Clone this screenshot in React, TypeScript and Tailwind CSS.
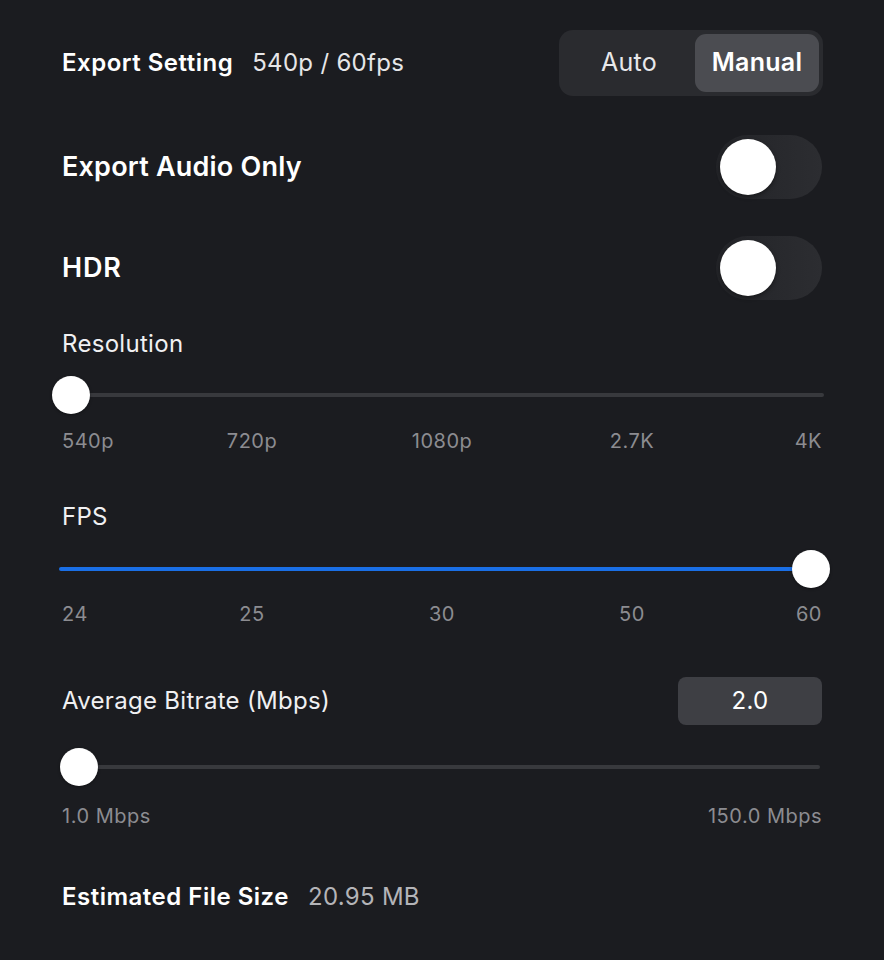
import React from "react";

const font = { fontFamily: "Inter, 'Noto Sans', sans-serif" };

function Toggle() {
  return (
    <div className="relative h-[64px] w-[106px] rounded-full bg-gradient-to-r from-[#232428] to-[#2c2d31]">
      <div className="absolute left-[4px] top-[4px] h-[56px] w-[56px] rounded-full bg-white shadow-[0_2px_4px_rgba(0,0,0,0.4)]" />
    </div>
  );
}

function Knob({ left }: { left: number }) {
  return (
    <div
      className="absolute top-[1px] h-[38px] w-[38px] rounded-full bg-white shadow-[0_1px_3px_rgba(0,0,0,0.4)]"
      style={{ left }}
    />
  );
}

function Ticks({ labels }: { labels: string[] }) {
  return (
    <div className="flex h-[24px] justify-between text-[20px] leading-[24px] tracking-[0.5px] text-[#8c8c91]">
      {labels.map((l, i) => {
        const pos =
          i === 0 ? "justify-start" : i === labels.length - 1 ? "justify-end" : "justify-center";
        return (
          <div key={l} className={`flex w-0 whitespace-nowrap ${pos}`}>
            <span>{l}</span>
          </div>
        );
      })}
    </div>
  );
}

export default function App() {
  return (
    <div className="min-h-[960px] w-full bg-[#1b1c20] px-[62px] pt-[30px] text-white" style={font}>
      {/* Export Setting */}
      <div className="flex h-[66px] items-center justify-between">
        <div className="flex items-baseline gap-[19px]">
          <span className="text-[24px] font-semibold tracking-[0.5px]">Export Setting</span>
          <span className="text-[24px] font-normal tracking-[0.3px] text-[#e6e6e8]">540p / 60fps</span>
        </div>
        <div className="-mr-px flex h-[66px] w-[264px] items-center rounded-[14px] bg-[#2a2b2f] p-[4px]">
          <div className="flex h-full flex-1 items-center justify-center text-[25px] tracking-[0.3px] text-[#e8e8ea]">
            Auto
          </div>
          <div className="flex h-[58px] w-[124px] items-center justify-center rounded-[11px] bg-[#4b4c51] text-[25px] font-semibold tracking-[0.3px]">
            Manual
          </div>
        </div>
      </div>

      {/* Export Audio Only */}
      <div className="mt-[39px] flex h-[64px] items-center justify-between">
        <span className="text-[27px] font-semibold tracking-[0.2px]">Export Audio Only</span>
        <Toggle />
      </div>

      {/* HDR */}
      <div className="mt-[37px] flex h-[64px] items-center justify-between">
        <span className="text-[27px] font-semibold tracking-[0.8px]">HDR</span>
        <Toggle />
      </div>

      {/* Resolution */}
      <div className="mt-[29px] h-[30px] text-[24px] leading-[30px] tracking-[0.3px] text-[#f0f0f2]">Resolution</div>
      <div className="relative -ml-[10px] -mr-[2px] mt-[16px] h-[40px]">
        <div className="absolute left-[8px] right-0 top-[18px] h-[4px] rounded-full bg-[#38393d]" />
        <Knob left={0} />
      </div>
      <div className="mt-[14px]">
        <Ticks labels={["540p", "720p", "1080p", "2.7K", "4K"]} />
      </div>

      {/* FPS */}
      <div className="mt-[49px] h-[30px] text-[24px] leading-[30px] tracking-[0.3px] text-[#f0f0f2]">FPS</div>
      <div className="relative -ml-[3px] -mr-[8px] mt-[17px] h-[40px]">
        <div className="absolute left-0 right-[19px] top-[18px] h-[4px] rounded-full bg-[#1a6fe6]" />
        <Knob left={733} />
      </div>
      <div className="mt-[13px]">
        <Ticks labels={["24", "25", "30", "50", "60"]} />
      </div>

      {/* Average Bitrate */}
      <div className="mt-[51px] flex h-[48px] items-center justify-between">
        <span className="text-[24px] tracking-[0.3px] text-[#f0f0f2]">Average Bitrate (Mbps)</span>
        <div className="flex h-[48px] w-[144px] items-center justify-center rounded-[8px] bg-[#3e3f44] text-[24px] tracking-[0.3px]">
          2.0
        </div>
      </div>
      <div className="relative mt-[22px] h-[40px]">
        <div className="absolute left-0 right-[2px] top-[18px] h-[4px] rounded-full bg-[#38393d]" />
        <Knob left={-2} />
      </div>
      <div className="mt-[17px] flex h-[24px] justify-between text-[20px] leading-[24px] tracking-[0.5px] text-[#8c8c91]">
        <span>1.0 Mbps</span>
        <span>150.0 Mbps</span>
      </div>

      {/* Estimated File Size */}
      <div className="mt-[54px] flex h-[30px] items-baseline gap-[19px] leading-[30px]">
        <span className="text-[24px] font-semibold tracking-[0.5px]">Estimated File Size</span>
        <span className="text-[24px] tracking-[0.3px] text-[#b4b4b8]">20.95 MB</span>
      </div>
    </div>
  );
}
